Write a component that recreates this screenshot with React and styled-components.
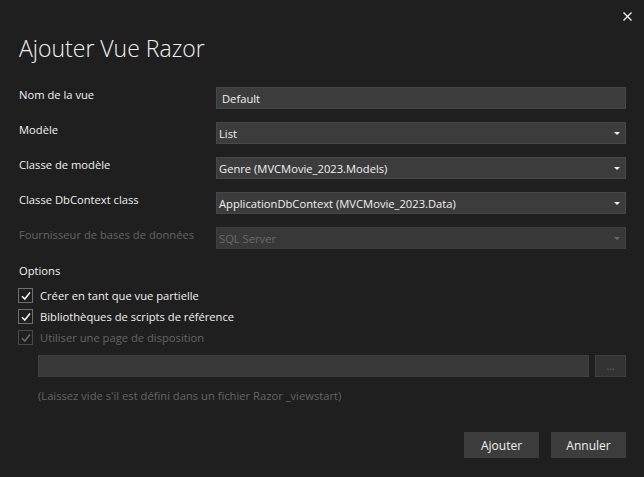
import React from 'react'
import styled, { createGlobalStyle } from 'styled-components'

const GlobalStyle = createGlobalStyle`
  html, body {
    margin: 0;
    padding: 0;
    background: #1f1f1f;
  }
  * { box-sizing: border-box; }
`

const fields = [
  { label: 'Nom de la vue', value: 'Default', text: true },
  { label: 'Modèle', value: 'List' },
  { label: 'Classe de modèle', value: 'Genre (MVCMovie_2023.Models)' },
  { label: 'Classe DbContext class', value: 'ApplicationDbContext (MVCMovie_2023.Data)' },
  { label: 'Fournisseur de bases de données', value: 'SQL Server', disabled: true },
]

const options = [
  { label: 'Créer en tant que vue partielle' },
  { label: 'Bibliothèques de scripts de référence' },
  { label: 'Utiliser une page de disposition', disabled: true },
]

const Check = ({ disabled }) => (
  <CheckBox $disabled={disabled}>
    <svg width="10" height="10" viewBox="0 0 10 10">
      <path d="M1 5.2 L3.8 8 L9 1.6" fill="none" stroke="currentColor" strokeWidth="1.6" />
    </svg>
  </CheckBox>
)

class App extends React.Component {
  render() {
    return (
      <Dialog>
        <GlobalStyle />
        <TopBar>
          <Close>
            <svg width="9" height="9" viewBox="0 0 9 9">
              <path d="M0.5 0.5 L8.5 8.5 M8.5 0.5 L0.5 8.5" stroke="#f0f0f0" strokeWidth="1.4" />
            </svg>
          </Close>
        </TopBar>
        <Title>Ajouter Vue Razor</Title>

        <Form>
          {fields.map(f => (
            <React.Fragment key={f.label}>
              <Label $disabled={f.disabled}>{f.label}</Label>
              <Field $disabled={f.disabled} $text={f.text}>
                <span>{f.value}</span>
                {!f.text && <Arrow $disabled={f.disabled} />}
              </Field>
            </React.Fragment>
          ))}
        </Form>

        <Section>Options</Section>
        <Checks>
          {options.map(o => (
            <CheckRow key={o.label} $disabled={o.disabled}>
              <Check disabled={o.disabled} />
              {o.label}
            </CheckRow>
          ))}
        </Checks>

        <PathRow>
          <PathInput />
          <Browse>...</Browse>
        </PathRow>
        <Hint>(Laissez vide s'il est défini dans un fichier Razor _viewstart)</Hint>

        <Footer>
          <Button>Ajouter</Button>
          <Button>Annuler</Button>
        </Footer>
      </Dialog>
    )
  }
}

export default App

const Dialog = styled.div`
  width: 644px;
  height: 477px;
  background: #1f1f1f;
  color: #f1f1f1;
  font-family: 'Open Sans', 'Noto Sans', sans-serif;
  font-size: 11.2px;
  padding: 0 18px 0 19px;
  display: flex;
  flex-direction: column;
`

const TopBar = styled.div`
  display: flex;
  justify-content: flex-end;
  height: 21px;
  padding-top: 12px;
  margin-right: -6px;
`

const Close = styled.div`
  width: 9px;
  height: 9px;
  display: flex;
`

const Title = styled.h1`
  margin: 11px 0 0;
  font-weight: 300;
  font-size: 23px;
  line-height: 32px;
  color: #f1f1f1;
`

const Form = styled.div`
  display: grid;
  grid-template-columns: 197px 1fr;
  row-gap: 13px;
  margin-top: 23px;
`

const Label = styled.div`
  line-height: 16px;
  padding-top: 0;
  color: ${p => p.$disabled ? '#656565' : '#f1f1f1'};
  white-space: nowrap;
`

const Field = styled.div`
  height: 22px;
  display: flex;
  align-items: center;
  justify-content: space-between;
  padding: 0 5px 0 ${p => p.$text ? '5px' : '2px'};
  border: 1px solid;
  color: ${p => p.$disabled ? '#6a6a6a' : '#f1f1f1'};
  background: ${p => p.$disabled ? '#383838' : '#3c3c3c'};
  border-color: ${p => p.$disabled ? '#3f3f3f' : '#474747'};
`

const Arrow = styled.div`
  width: 0;
  height: 0;
  border-left: 3.5px solid transparent;
  border-right: 3.5px solid transparent;
  border-top: 3.5px solid ${p => p.$disabled ? '#6a6a6a' : '#f1f1f1'};
  margin-top: 1px;
`

const Section = styled.div`
  margin-top: 14px;
  line-height: 16px;
`

const Checks = styled.div`
  display: flex;
  flex-direction: column;
  gap: 6px;
  margin-top: 9px;
`

const CheckRow = styled.div`
  display: flex;
  align-items: center;
  gap: 7px;
  height: 15px;
  line-height: 15px;
  margin-left: -1px;
  color: ${p => p.$disabled ? '#656565' : '#f1f1f1'};
`

const CheckBox = styled.span`
  width: 15px;
  height: 15px;
  border: 1px solid ${p => p.$disabled ? '#4a4a4a' : '#6f6f6f'};
  display: flex;
  align-items: center;
  justify-content: center;
  color: ${p => p.$disabled ? '#6a6a6a' : '#f1f1f1'};
`

const PathRow = styled.div`
  display: flex;
  gap: 6px;
  margin: 10px 0 0 19px;
`

const PathInput = styled.div`
  flex: 1;
  height: 22px;
  background: #383838;
  border: 1px solid #3f3f3f;
`

const Browse = styled.div`
  width: 31px;
  height: 22px;
  background: #333333;
  border: 1px solid #3f3f3f;
  color: #6a6a6a;
  font-size: 10px;
  display: flex;
  align-items: center;
  justify-content: center;
`

const Hint = styled.div`
  margin: 11px 0 0 19px;
  line-height: 16px;
  color: #656565;
`

const Footer = styled.div`
  display: flex;
  justify-content: flex-end;
  gap: 12px;
  margin-top: 28px;
`

const Button = styled.div`
  width: 75px;
  height: 26px;
  background: #3c3c3c;
  color: #f1f1f1;
  display: flex;
  align-items: center;
  justify-content: center;
  font-size: 12px;
`
